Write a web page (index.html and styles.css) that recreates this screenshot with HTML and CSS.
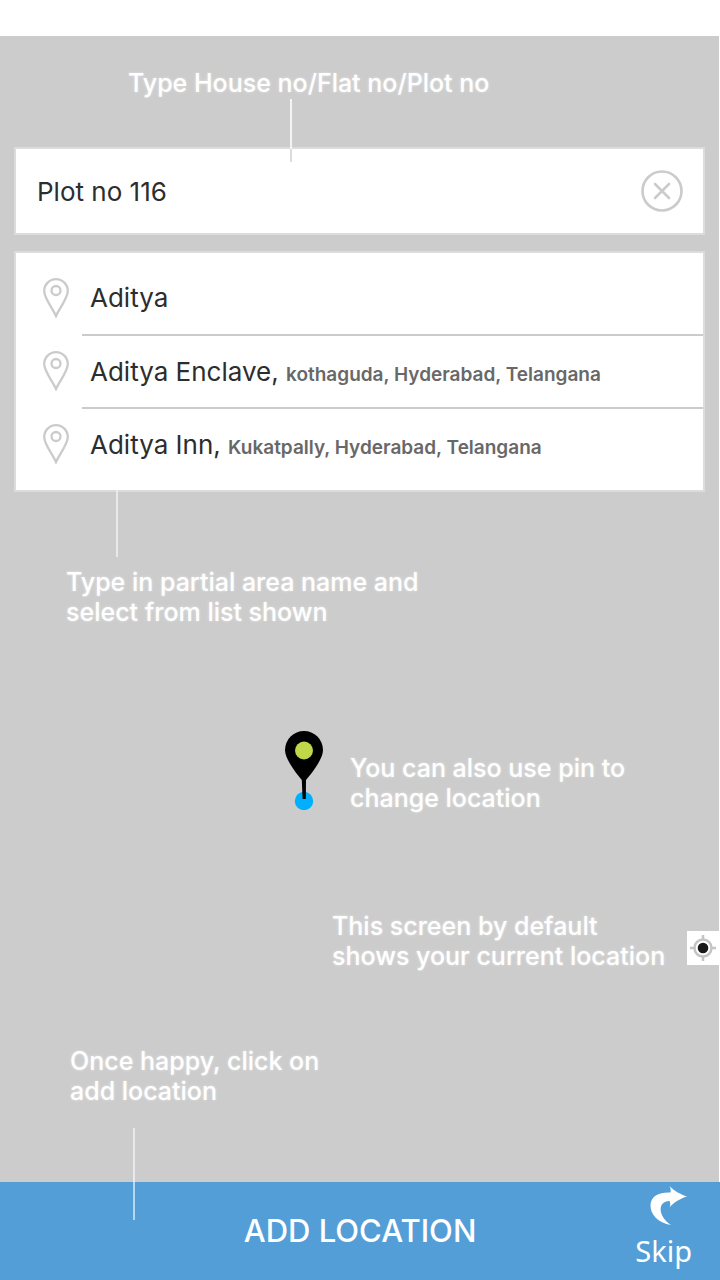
FILE: index.html
```html
<!DOCTYPE html>
<html lang="en">
<head>
<meta charset="utf-8">
<meta name="viewport" content="width=device-width, initial-scale=1">
<title>Add location</title>
<link rel="stylesheet" href="styles.css">
</head>
<body>
<svg class="defs" width="0" height="0" aria-hidden="true">
  <symbol id="pin" viewBox="0 0 26 40">
    <path d="M13 38C10.500 31.500 1.200 20.500 1.200 13a11.800 11.800 0 0 1 23.600 0C24.800 20.500 15.500 31.500 13 38Z" fill="none" stroke="#cbcbcb" stroke-width="2.300"/>
    <circle cx="13" cy="12.500" r="4.500" fill="none" stroke="#cbcbcb" stroke-width="2.300"/>
  </symbol>
</svg>
<div class="screen">
  <main class="map">
    <p class="hint hint-house">Type House no/Flat no/Plot no</p>
    <form class="card search">
      <span class="lead lead-house"></span>
      <input class="search-input" type="text" value="Plot no 116" aria-label="House, flat or plot number">
      <button class="clear" type="button" aria-label="Clear">
        <svg width="42" height="42" viewBox="0 0 42 42" fill="none" stroke="#cbcbcb" stroke-width="2.600" stroke-linecap="round">
          <circle cx="21" cy="21" r="19.500"/>
          <path d="M14 14l14 14M28 14L14 28"/>
        </svg>
      </button>
    </form>
    <section class="card results">
      <ul class="list">
        <li class="item"><svg class="pin"><use href="#pin"/></svg><button class="place" type="button">Aditya</button></li>
        <li class="item"><svg class="pin"><use href="#pin"/></svg><button class="place" type="button">Aditya Enclave, <span class="area">kothaguda, Hyderabad, Telangana</span></button></li>
        <li class="item"><svg class="pin"><use href="#pin"/></svg><button class="place" type="button">Aditya Inn, <span class="area">Kukatpally, Hyderabad, Telangana</span></button></li>
      </ul>
      <span class="lead lead-area"></span>
    </section>
    <p class="hint hint-area">Type in partial area name and<br>select from list shown</p>
    <div class="marker-row">
      <svg class="marker" width="40" height="80" viewBox="0 0 40 80" role="img" aria-label="Location pin">
        <circle cx="20" cy="71" r="9.200" fill="#00b0ff"/>
        <path d="M20 1A19 19 0 0 1 39 20C39 29 28 43 22 50L21.800 69H18.600L17.800 50C12 43 1 29 1 20A19 19 0 0 1 20 1Z" fill="#000"/>
        <circle cx="20" cy="20.500" r="9" fill="#bed74b"/>
      </svg>
      <p class="hint">You can also use pin to<br>change location</p>
    </div>
    <div class="locate-row">
      <p class="hint">This screen by default<br>shows your current location</p>
      <button class="locate" type="button" aria-label="Current location">
        <svg width="26" height="26" viewBox="0 0 26 26" fill="none" stroke="#c4c4c4">
          <path d="M13 0v5M13 21v5M0 13h5M21 13h5" stroke-width="2.500"/>
          <circle cx="13" cy="13" r="8.500" stroke-width="2.500"/>
          <circle cx="13" cy="13" r="5.300" fill="#191919" stroke="none"/>
        </svg>
      </button>
    </div>
    <p class="hint hint-add">Once happy, click on<br>add location</p>
  </main>
  <footer class="actions">
    <span class="lead lead-add"></span>
    <button class="add" type="button">ADD LOCATION</button>
    <button class="skip" type="button">
      <svg class="skip-arrow" width="38" height="40" viewBox="0 0 38 40" fill="#fff"><path d="M19.500 0C24 5 31 8.500 37 10.500C30 12.500 23 17 19.500 21.500C20.500 19 20.500 17 19.500 15C7.500 15 7.500 30 21 39C8 37 0 28 0.500 19C1 10 9 6 20.500 6.500C21 4 20.500 2 19.500 0Z"/></svg>
      <span>Skip</span>
    </button>
  </footer>
</div>
</body>
</html>
```
FILE: styles.css
```css
* { box-sizing: border-box; }
body {
  margin: 0;
  background: #fff;
  font-family: Inter, "Liberation Sans", sans-serif;
  color: #2d2d2d;
}
p, ul { margin: 0; padding: 0; list-style: none; }
button, input {
  border: 0;
  padding: 0;
  background: none;
  font: inherit;
  color: inherit;
}
svg { display: block; flex: none; }
.defs { position: absolute; }
.screen {
  min-height: 100vh;
  padding-top: 36px;
  display: flex;
  flex-direction: column;
}
.map {
  flex: 1;
  margin-right: 1px;
  padding-top: 32px;
  background: #ccc;
}
.hint {
  color: #fff;
  font-size: 25px;
  font-weight: 500;
  line-height: 30px;
  text-shadow: 0 0 3px rgba(255, 255, 255, 0.5);
}
.hint-house { padding-left: 128px; }
.card {
  position: relative;
  margin: 0 14px;
  background: #fff;
  border: 2px solid #dcdcdc;
}
.search {
  display: flex;
  align-items: center;
  margin-top: 49px;
  height: 88px;
  padding: 0 20px 0 21px;
}
.search-input {
  flex: 1;
  min-width: 0;
  padding-top: 2px;
  font-size: 26px;
  line-height: 32px;
}
.results {
  margin-top: 16px;
  padding: 8px 0 10px;
}
.item {
  display: flex;
  align-items: center;
  padding-left: 27px;
  gap: 13px;
}
.pin { width: 26px; height: 40px; }
.place {
  flex: 1;
  height: 73px;
  padding-left: 8px;
  text-align: left;
  font-size: 26px;
}
.item + .item .place { border-top: 2px solid #cbcbcb; }
.area {
  font-size: 19px;
  font-weight: 600;
  color: #686868;
}
.lead {
  position: absolute;
  width: 2px;
  background: #e9e9e9;
}
.lead-house { left: 274px; top: -50px; height: 63px; background: linear-gradient(#f4f4f4 50px, #dcdcdc 50px); }
.lead-area { left: 100px; top: 100%; height: 67px; }
.lead-add { left: 133px; top: -54px; height: 92px; background: linear-gradient(#e9e9e9 54px, #b8d6ee 54px); }
.hint-area { padding: 75px 0 0 66px; }
.marker-row {
  display: flex;
  align-items: center;
  gap: 26px;
  margin-top: 100px;
  padding-left: 284px;
}
.marker-row .hint { padding-top: 26px; }
.locate-row {
  display: flex;
  align-items: center;
  justify-content: space-between;
  margin-top: 98px;
  padding-left: 332px;
}
.locate {
  display: grid;
  place-items: center;
  width: 32px;
  height: 34px;
  margin-top: 14px;
  background: #fff;
}
.hint-add { padding: 75px 0 75px 70px; }
.actions {
  position: relative;
  flex: none;
  display: grid;
  grid-template-columns: 1fr auto 1fr;
  align-items: center;
  min-height: 98px;
  background: #549ed8;
  color: #fff;
}
.add {
  grid-column: 2;
  font-size: 31px;
  font-weight: 500;
  line-height: 40px;
}
.skip {
  align-self: start;
  justify-self: end;
  display: flex;
  flex-direction: column;
  align-items: center;
  gap: 5px;
  margin-right: 28px;
  padding-top: 4px;
  font-family: "Noto Sans", sans-serif;
  font-size: 29px;
  line-height: 40px;
}
.skip-arrow { margin-left: 10px; }
```
